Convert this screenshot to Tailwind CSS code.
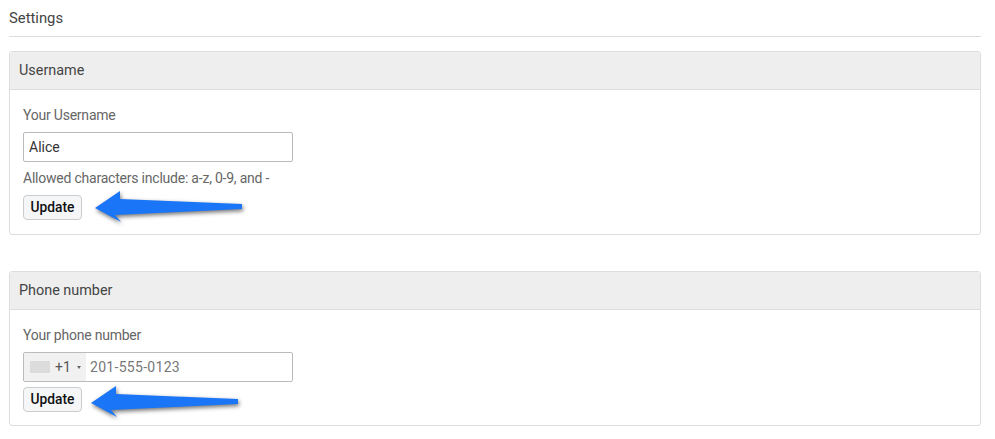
<!DOCTYPE html>
<html>
<head>
<meta charset="utf-8">
<script src="https://cdn.jsdelivr.net/npm/@tailwindcss/browser@4"></script>
</head>
<body class="bg-white font-['Roboto',sans-serif] text-[14px] text-[#555] overflow-hidden">
<div class="w-[995px] h-[439px] px-[9px] pr-[14px] overflow-hidden">
  <h1 class="h-[37px] pt-[9px] border-b border-[#dddddd] text-[14.8px] leading-[18px] font-normal text-[#444]">Settings</h1>

  <section class="mt-[14px] h-[184px] border border-[#dddddd] rounded-[3px]">
    <h2 class="h-[38px] bg-[#eeeeee] border-b border-[#dddddd] px-[9px] text-[14.4px] leading-[37px] font-normal text-[#444]">Username</h2>
    <div class="relative pl-[13px] pt-[17px]">
      <label class="block text-[14px] tracking-[-0.22px] leading-[17px] text-[#666]">Your Username</label>
      <input value="Alice" class="block mt-[8px] w-[270px] h-[30px] border border-[#bbbbbb] rounded-[2px] px-[5px] text-[14px] text-[#333] font-['Roboto',sans-serif]">
      <p class="mt-[8px] text-[14px] tracking-[-0.22px] leading-[17px] text-[#666]">Allowed characters include: a-z, 0-9, and -</p>
      <button class="block mt-[8px] w-[59px] h-[25px] border border-[#cccccc] rounded-[4px] bg-[#f5f6f7] text-[13.8px] font-medium text-[#111] leading-[23px]">Update</button>
      <svg class="absolute left-[80px] top-[98px] drop-shadow-[1px_2px_2px_rgba(0,0,0,0.55)]" width="160" height="40" viewBox="0 0 160 40">
        <path d="M5 20 L30 3 L30 11 L152 16 L152 21 L25 27 L31 34 Z" fill="#1a76f7"/>
      </svg>
    </div>
  </section>

  <section class="mt-[36px] h-[155px] border border-[#dddddd] rounded-[3px]">
    <h2 class="h-[38px] bg-[#eeeeee] border-b border-[#dddddd] px-[9px] text-[14.4px] leading-[37px] font-normal text-[#444]">Phone number</h2>
    <div class="relative pl-[13px] pt-[17px]">
      <label class="block text-[14px] tracking-[-0.22px] leading-[17px] text-[#666]">Your phone number</label>
      <div class="flex mt-[8px] w-[270px] h-[30px] border border-[#bbbbbb] rounded-[2px] items-stretch">
        <div class="flex items-center w-[62px] bg-[#f1f1f1] pl-[6px]">
          <span class="w-[20px] h-[12px] bg-[#dcdcdc] rounded-[1px]"></span>
          <span class="ml-[5px] text-[14px] text-[#555]">+1</span>
          <span class="ml-[6px] w-0 h-0 border-x-[2px] border-x-transparent border-t-[3px] border-t-[#666]"></span>
        </div>
        <input placeholder="201-555-0123" class="flex-1 min-w-0 pl-[4px] text-[14px] placeholder:text-[#777] tracking-[0.3px] font-['Roboto',sans-serif]">
      </div>
      <button class="block mt-[5px] w-[59px] h-[25px] border border-[#cccccc] rounded-[4px] bg-[#f5f6f7] text-[13.8px] font-medium text-[#111] leading-[23px]">Update</button>
      <svg class="absolute left-[76px] top-[73px] drop-shadow-[1px_2px_2px_rgba(0,0,0,0.55)]" width="160" height="40" viewBox="0 0 160 40">
        <path d="M5 20 L30 3 L30 11 L152 16 L152 21 L25 27 L31 34 Z" fill="#1a76f7"/>
      </svg>
    </div>
  </section>
</div>
</body>
</html>
